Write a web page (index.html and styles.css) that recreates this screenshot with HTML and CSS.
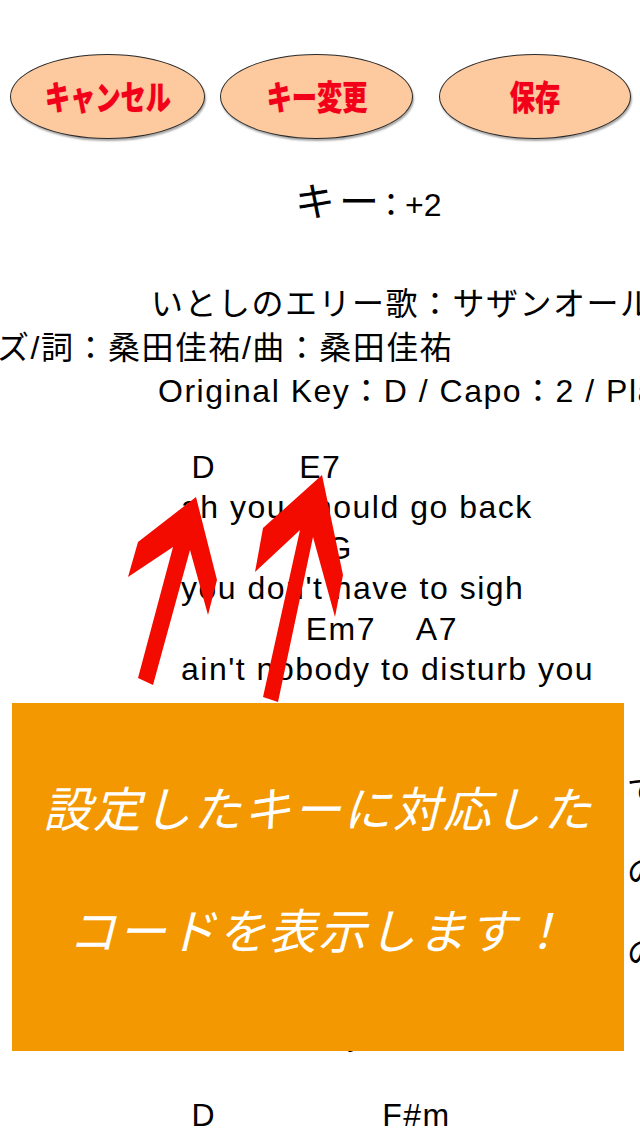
FILE: index.html
```html
<!DOCTYPE html>
<html lang="ja">
<head>
<meta charset="utf-8">
<title>キー変更</title>
<link rel="stylesheet" href="styles.css">
</head>
<body>
<div class="page">
  <div class="toolbar">
    <div class="btn btn-cancel"><span class="btn-label">キャンセル</span></div>
    <div class="btn btn-key"><span class="btn-label">キー変更</span></div>
    <div class="btn btn-save"><span class="btn-label">保存</span></div>
  </div>

  <div class="key-line"><span class="key-label">キー</span><span class="key-colon">：</span><span class="key-value">+2</span></div>

  <div class="meta">
    <div class="meta-row title1">いとしのエリー歌：サザンオールスターズ</div>
    <div class="meta-row title2">ズ/詞：桑田佳祐/曲：桑田佳祐</div>
    <div class="meta-row origkey">Original Key：D / Capo：2 / Play：C</div>
  </div>

  <div class="sheet">
    <div class="row"> D        E7</div>
    <div class="row">ah you should go back</div>
    <div class="row">              G</div>
    <div class="row">you don't have to sigh</div>
    <div class="row">            Em7    A7</div>
    <div class="row">ain't nobody to disturb you</div>
    <div class="row"></div>
    <div class="row"></div>
    <div class="row"> 　　　　　　　　　　　　　で</div>
    <div class="row"></div>
    <div class="row"> 　　　　　　　　　　　　　の</div>
    <div class="row"></div>
    <div class="row"> 　　　　　　　　　　　　　の</div>
    <div class="row"></div>
    <div class="row">                y</div>
    <div class="row"></div>
    <div class="row"> D                F#m</div>
  </div>

  <svg class="arrows" viewBox="0 0 640 1136" width="640" height="1136" aria-hidden="true">
    <polygon class="arrow" points="196,497 217,580 208,615 190,550 153,685 138,678 173,547 128,577 138,542"/>
    <polygon class="arrow" points="322,475 343,575 335,617 313,537 278,702 263,697 300,530 255,572 263,528"/>
  </svg>

  <div class="callout">
    <div class="callout-text">設定したキーに対応した<br>コードを表示します！</div>
  </div>
</div>
</body>
</html>
```

FILE: styles.css
```css
html, body {
  margin: 0;
  padding: 0;
  background: #ffffff;
}

.page {
  position: relative;
  width: 640px;
  height: 1136px;
  overflow: hidden;
  background: #ffffff;
  color: #000000;
  font-family: "Liberation Sans", "Noto Sans CJK JP", sans-serif;
}

/* ---------- top buttons ---------- */
.toolbar {
  display: flex;
  align-items: center;
  margin-top: 52px;
  height: 88px;
  padding-left: 10px;
}

.btn {
  height: 85px;
  box-sizing: border-box;
  border: 1.5px solid #2a2a2a;
  border-radius: 50%;
  background: #fdcaa0;
  box-shadow: 1px 2px 2px rgba(0, 0, 0, 0.35);
  display: flex;
  align-items: center;
  justify-content: center;
}

.btn-cancel { width: 195px; }
.btn-key { width: 193px; margin-left: 15px; }
.btn-save { width: 192px; margin-left: 26px; }

.btn-label {
  display: inline-block;
  font-family: "Noto Sans CJK JP", sans-serif;
  font-weight: 900;
  font-size: 34px;
  line-height: 1;
  color: #f2001a;
  transform: scaleX(0.74);
  text-shadow: 0 0 1px rgba(242, 0, 26, 0.6);
  white-space: nowrap;
}

/* ---------- key line ---------- */
.key-line {
  margin-top: 38px;
  height: 43px;
  line-height: 43px;
  padding-left: 295px;
  font-size: 32px;
  white-space: nowrap;
}

.key-label {
  font-family: "Noto Sans CJK JP", sans-serif;
  font-size: 40px;
  letter-spacing: 4px;
}

.key-colon {
  font-family: "Noto Sans CJK JP", sans-serif;
  font-size: 32px;
  font-feature-settings: "palt";
}

.key-value {
  font-size: 32px;
  padding-left: 6px;
}

/* ---------- song info ---------- */
.meta {
  margin-top: 62px;
}

.meta-row {
  height: 43.5px;
  line-height: 43.5px;
  font-size: 32px;
  letter-spacing: 1.5px;
  white-space: nowrap;
}

.title1 { padding-left: 151px; }
.title2 { margin-left: -3px; }
.origkey { padding-left: 158px; }

/* ---------- chord sheet ---------- */
.sheet {
  margin-top: 33px;
}

.row {
  height: 40.5px;
  line-height: 40.5px;
  font-size: 32px;
  letter-spacing: 1.5px;
  padding-left: 181px;
  white-space: pre;
}

/* ---------- overlays ---------- */
.arrows {
  position: absolute;
  left: 0;
  top: 0;
  pointer-events: none;
}

.arrow {
  fill: #f30b00;
}

.callout {
  position: absolute;
  left: 12px;
  top: 703px;
  width: 612px;
  height: 348px;
  box-sizing: border-box;
  padding-bottom: 20px;
  background: #f39800;
  display: flex;
  align-items: center;
  justify-content: center;
}

.callout-text {
  color: #ffffff;
  font-family: "Noto Sans CJK JP", sans-serif;
  font-style: italic;
  font-weight: 400;
  font-size: 48px;
  letter-spacing: 2px;
  line-height: 122px;
  text-align: center;
  white-space: nowrap;
}
```
